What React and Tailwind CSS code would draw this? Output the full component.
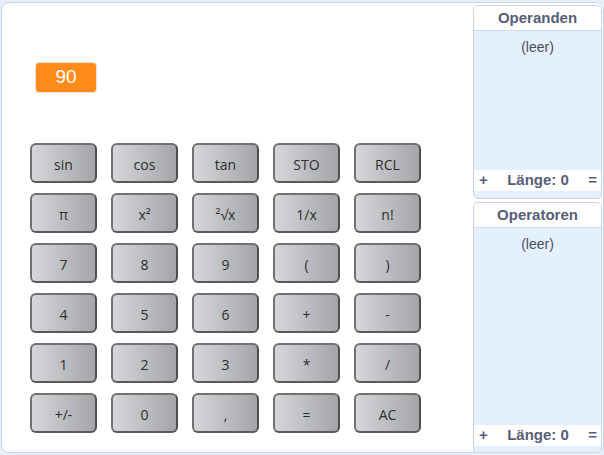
import React from "react";

const rows = [
  ["sin", "cos", "tan", "STO", "RCL"],
  ["π", "x²", "²√x", "1/x", "n!"],
  ["7", "8", "9", "(", ")"],
  ["4", "5", "6", "+", "-"],
  ["1", "2", "3", "*", "/"],
  ["+/-", "0", ",", "=", "AC"],
];

function Monitor({ title, className }) {
  return (
    <div
      className={
        "absolute flex flex-col overflow-hidden rounded-[5px] border border-[#c7d1e0] bg-[#e5f0ff] text-[#575e75] " +
        className
      }
      style={{ fontFamily: '"Liberation Sans", Arial, sans-serif' }}
    >
      <div className="flex h-[25px] shrink-0 items-center justify-center border-b border-[#d5dbe5] bg-white text-[15px] font-bold">
        {title}
      </div>
      <div className="flex flex-1 justify-center pt-[6px] text-[14px] text-[#4a4f60]">(leer)</div>
      <div className="flex h-[21px] shrink-0 items-center justify-between bg-white pl-[5px] pr-[4px] text-[15px] font-bold">
        <span>+</span>
        <span>Länge: 0</span>
        <span>=</span>
      </div>
      <div className="h-[7px] shrink-0" />
    </div>
  );
}

export default function App() {
  return (
    <div className="h-[455px] w-[604px] overflow-hidden bg-[#e9eff8] pl-px pt-[2px]">
      <div className="relative h-[451px] w-[603px] overflow-hidden rounded-[8px] border border-[#c9d5e8] bg-white">
        <div className="ml-[33px] mt-[59px] flex h-[31px] w-[62px] items-center justify-center rounded-[4px] border border-[#e2e2e2] bg-[#ff8c1a] text-[19px] text-white"
          style={{ fontFamily: '"Liberation Sans", Arial, sans-serif' }}>
          90
        </div>
        <div
          className="ml-[28px] mt-[50px] grid w-[391px] grid-cols-5 gap-x-[14px] gap-y-[10px]"
          style={{ fontFamily: '"Open Sans", "DejaVu Sans", sans-serif' }}
        >
          {rows.flat().map((label, i) => (
            <div
              key={i}
              className="flex h-[40px] w-[67px] items-center justify-center rounded-[6px] border-2 border-[#717171] border-r-[#4f4f4f] border-b-[#5a5a5a] bg-gradient-to-r from-[#d6d7da] to-[#a4a5a8] pt-[2px] text-[14px] text-[#2e2e2e]"
            >
              {label}
            </div>
          ))}
        </div>
        <Monitor title="Operanden" className="left-[471px] top-[2px] h-[194px] w-[129px]" />
        <Monitor title="Operatoren" className="left-[471px] top-[199px] h-[252px] w-[129px]" />
      </div>
    </div>
  );
}
